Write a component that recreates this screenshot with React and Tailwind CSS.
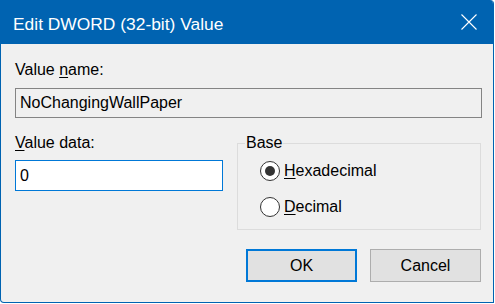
export default function App() {
  const font = { fontFamily: '"Liberation Sans", Arial, sans-serif' };

  return (
    <div className="w-[495px] h-[304px] bg-white" style={font}>
      <div className="w-[494px] h-[303px] flex flex-col bg-[#f0f0f0] border-x border-b border-[#0063b1] rounded-tr-[4px] rounded-bl-[4px] overflow-hidden">
        {/* title bar */}
        <div className="h-[44px] shrink-0 bg-[#0063b1] flex items-center justify-between">
          <span className="pl-[12px] pt-[3px] text-[17.4px] leading-[20px] text-white">
            Edit DWORD (32-bit) Value
          </span>
          <div className="w-[46px] h-[44px] flex items-center justify-center mr-[1px]">
            <svg width="16" height="16" viewBox="0 0 16 16">
              <path d="M0.5 0.5 L15.5 15.5 M15.5 0.5 L0.5 15.5" stroke="white" strokeWidth="1.1" fill="none" />
            </svg>
          </div>
        </div>

        {/* body */}
        <div className="flex flex-col pl-[14px] pt-[17px] text-[16px] leading-[18px] text-black">
          <div>
            Value <span className="underline underline-offset-2">n</span>ame:
          </div>
          <div className="mt-[9px] w-[467px] h-[30px] border border-[#848484] bg-[#f0f0f0] flex items-center pl-[4px]">
            NoChangingWallPaper
          </div>

          <div className="mt-[16px] flex">
            <div className="w-[208px] flex flex-col">
              <div>
                <span className="underline underline-offset-2">V</span>alue data:
              </div>
              <div className="mt-[8px] h-[31px] border border-[#0078d7] bg-white flex items-center pl-[4px]">
                0
              </div>
            </div>

            <fieldset className="ml-[14px] w-[244px] h-[96px] border border-[#dcdcdc] pl-[22px] pb-[11px]">
              <legend className="ml-[-15px] px-[1px]">Base</legend>
              <div className="mt-[9px] flex flex-col gap-[16px]">
                <div className="flex items-center h-[20px]">
                  <div className="w-[20px] h-[20px] rounded-full border-[1.5px] border-[#333333] bg-white flex items-center justify-center">
                    <div className="w-[10px] h-[10px] rounded-full bg-[#333333]" />
                  </div>
                  <span className="ml-[4px]">
                    <span className="underline underline-offset-2">H</span>exadecimal
                  </span>
                </div>
                <div className="flex items-center h-[20px]">
                  <div className="w-[20px] h-[20px] rounded-full border-[1.5px] border-[#333333] bg-white" />
                  <span className="ml-[4px]">
                    <span className="underline underline-offset-2">D</span>ecimal
                  </span>
                </div>
              </div>
            </fieldset>
          </div>

          <div className="mt-[19px] flex justify-end pr-[12px] gap-[13px]">
            <button className="w-[111px] h-[33px] border-2 border-[#0078d7] bg-[#e1e1e1] flex items-center justify-center">
              OK
            </button>
            <button className="w-[111px] h-[33px] border border-[#adadad] bg-[#e1e1e1] flex items-center justify-center">
              Cancel
            </button>
          </div>
        </div>
      </div>
    </div>
  );
}
